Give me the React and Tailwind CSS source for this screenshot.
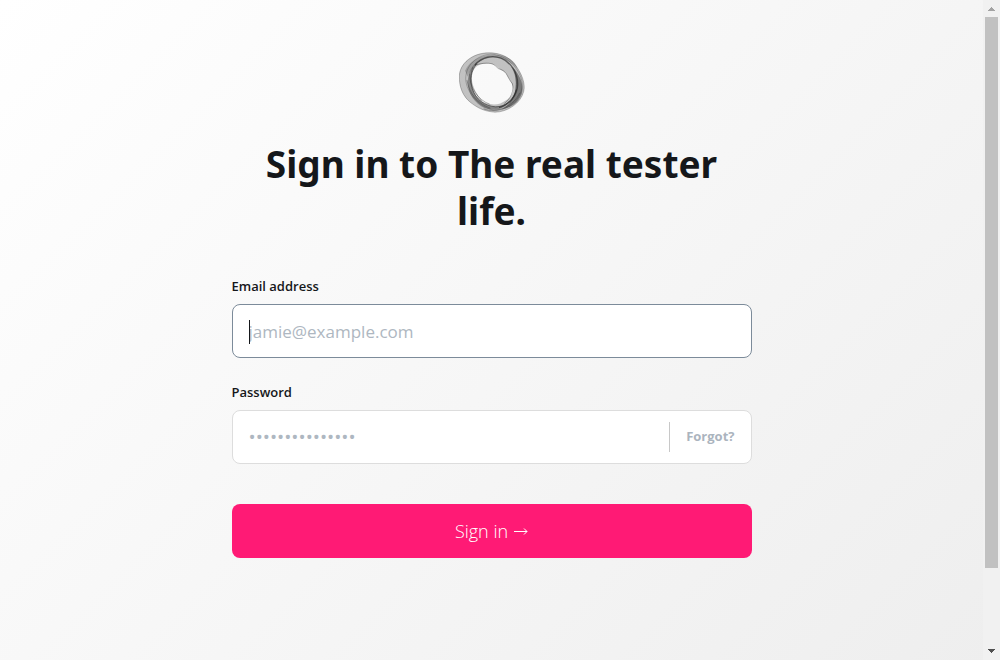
import React from 'react';

function Logo() {
  return (
    <svg viewBox="30 36 198 182" className="h-[61px] w-[66px]" role="img" aria-label="The real tester life">
      <path fillRule="evenodd" fill="#8a8a8a" fillOpacity="0.5"
        d="M31 108C32 70 70 38 120 38C150 38 180 48 200 76C218 100 230 130 224 154C216 188 176 216 138 216C112 214 92 208 66 188C42 170 30 140 31 108Z M66 112C66 140 78 164 92 178C108 192 134 196 154 190C176 180 194 168 193 146C190 126 176 112 170 98C160 92 150 86 140 76C126 68 110 70 96 72C80 76 68 92 66 112Z" />
      <path fill="#666" fillOpacity="0.4" d="M48 92C62 56 110 36 160 46C190 56 200 70 206 86C180 56 140 46 110 56C84 64 64 84 56 110Z" />
      <path fill="#555" fillOpacity="0.55" d="M66 112C62 150 84 182 116 196C140 204 166 200 184 180C170 206 140 214 108 204C72 188 50 150 58 110C60 92 70 76 84 66C72 82 66 96 66 112Z" />
      <path fill="#333" fillOpacity="0.5" d="M192 82C216 108 226 140 218 162C206 190 186 202 158 208C184 190 200 168 200 138C202 116 198 98 192 82Z" />
      <g fill="none" stroke="#1c1c1c">
        <path strokeOpacity="0.6" strokeWidth="4" d="M78 74C100 50 130 44 156 54C186 66 206 98 206 132C206 164 180 196 150 202" />
        <path strokeOpacity="0.55" strokeWidth="3" d="M84 70C66 90 62 120 70 146C80 178 108 198 140 200C170 200 194 178 202 148" />
        <path strokeOpacity="0.35" strokeWidth="2" d="M50 116C50 76 82 46 124 42C170 42 214 84 220 130C220 176 180 212 134 210C90 200 52 158 50 116Z" />
        <path strokeOpacity="0.5" strokeWidth="2" d="M62 102C62 144 88 180 122 192M54 120C60 160 86 190 124 204M72 80C60 110 66 146 98 182M188 80C206 110 210 154 182 188M104 206C144 222 196 196 212 158" />
        <path strokeOpacity="0.5" strokeWidth="2" d="M76 76C92 70 116 66 132 72C146 80 144 86 156 88C176 96 174 112 190 130C196 152 186 174 166 190" />
        <path strokeOpacity="0.4" strokeWidth="2" d="M31 108C32 70 70 38 120 38C150 38 180 48 200 76C218 100 230 130 224 154C216 188 176 216 138 216C112 214 92 208 66 188C42 170 30 140 31 108Z" />
      </g>
    </svg>
  );
}

function ScrollRail() {
  return (
    <div className="flex w-[17px] shrink-0 flex-col items-center bg-[#f1f1f1]" aria-hidden="true">
      <svg viewBox="0 0 17 17" className="h-[17px] w-[17px]" shapeRendering="crispEdges">
        <path fill="#a3a3a3" d="M8 7h1v1h1v1h1v1h1v1H5v-1h1V9h1V8h1z" />
      </svg>
      <div className="flex w-[13px] grow flex-col">
        <div className="grow-[551] bg-[#c1c1c1]" />
        <div className="grow-[75]" />
      </div>
      <svg viewBox="0 0 17 17" className="h-[17px] w-[17px]" shapeRendering="crispEdges">
        <path fill="#505050" d="M5 6h7v1h-1v1h-1v1H9v1H8V9H7V8H6V7H5z" />
      </svg>
    </div>
  );
}

export default function App() {
  return (
    <div className="flex min-h-screen bg-linear-135 from-white to-[#eeeeee] font-['Open_Sans','Noto_Sans',sans-serif] text-[#15171a]">
      <main className="flex grow flex-col items-center px-4 pt-[52px]">
        <div className="flex w-full max-w-[520px] flex-col">
          <header className="flex flex-col items-center">
            <Logo />
            <h1 className="mt-[27px] max-w-[480px] text-center font-['Noto_Sans',sans-serif] text-[37px] leading-[47px] font-bold">
              Sign in to The real tester life.
            </h1>
          </header>
          <form className="mt-[42px] flex flex-col" onSubmit={(e) => e.preventDefault()}>
            <label htmlFor="email" className="mb-2 text-[13px] leading-5 font-semibold">Email address</label>
            <div className="relative flex">
              <input id="email" type="email" placeholder="jamie@example.com"
                className="h-[54px] w-full rounded-lg border border-[#7c8b9a] bg-white px-4 text-[17px] caret-transparent outline-none placeholder:text-[#aeb7c1]" />
              <span className="absolute top-4 left-[17px] h-6 w-px bg-[#15171a]" aria-hidden="true" />
            </div>
            <label htmlFor="password" className="mt-6 mb-2 text-[13px] leading-5 font-semibold">Password</label>
            <div className="flex h-[54px] items-center rounded-lg border border-[#dddddd] bg-white">
              <input id="password" type="password" placeholder="•••••••••••••••"
                className="h-full min-w-0 grow rounded-lg bg-transparent px-4 text-[19px] outline-none placeholder:text-[#aeb7c1]" />
              <button type="button" className="h-[30px] border-l border-[#c8c8c8] px-4 text-[13px] font-bold text-[#abb4be]">Forgot?</button>
            </div>
            <button type="submit" className="mt-10 flex h-[54px] items-center justify-center gap-[6px] rounded-lg bg-[#ff1a75] text-[18px] font-light text-white">
              Sign in
              <svg viewBox="0 0 14 8" className="h-2 w-[14px]" fill="none" stroke="currentColor" aria-hidden="true">
                <path d="M0 4.5H13M10 1.5L13 4.5L10 7.5" />
              </svg>
            </button>
          </form>
        </div>
      </main>
      <ScrollRail />
    </div>
  );
}
